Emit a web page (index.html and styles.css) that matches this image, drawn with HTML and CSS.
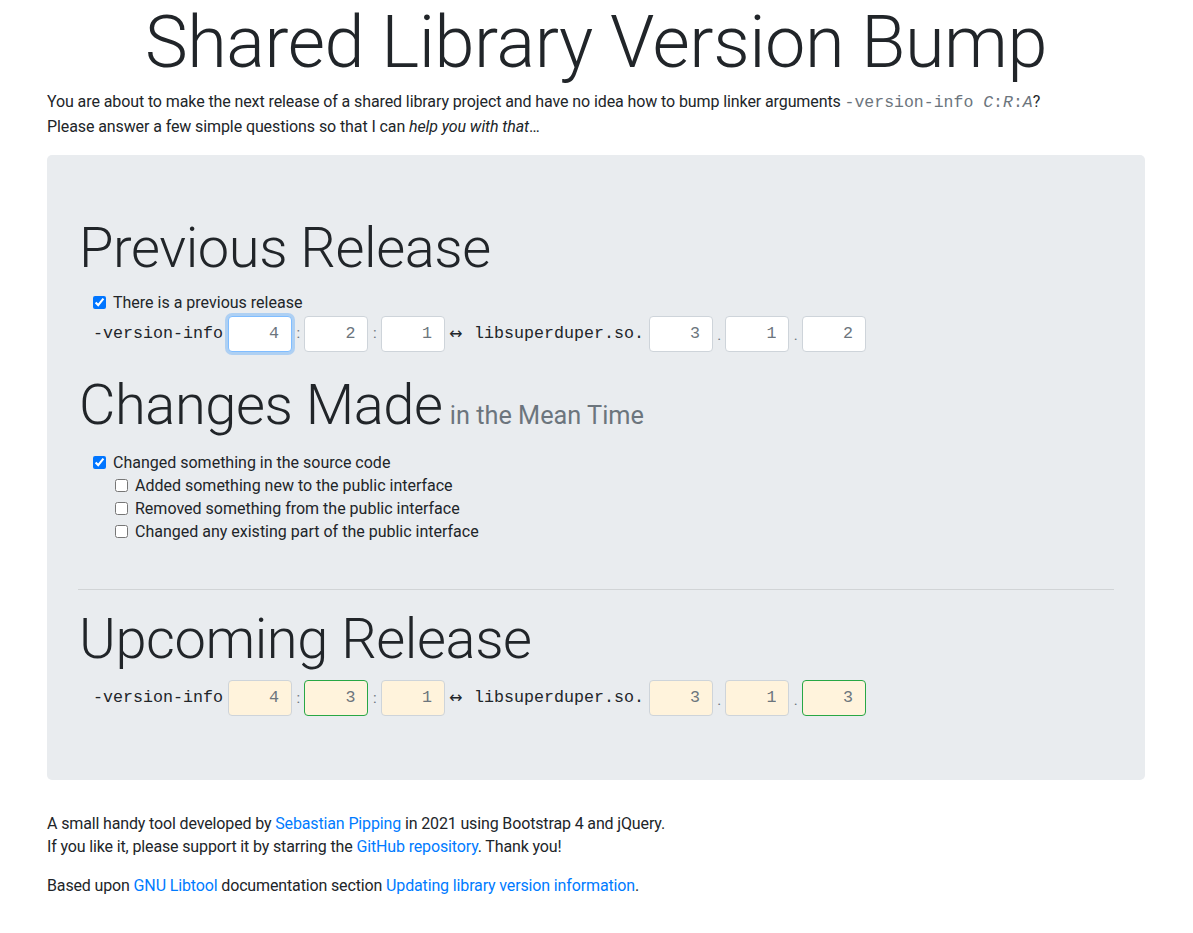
FILE: index.html
```html
<!DOCTYPE html>
<html lang="en">
<head>
<meta charset="utf-8">
<title>Shared Library Version Bump</title>
<link rel="stylesheet" href="styles.css">
</head>
<body>
<div class="page">
  <h1 class="title">Shared Library Version Bump</h1>
  <p class="intro">You are about to make the next release of a shared library project and have no idea how to bump linker arguments <code class="mono muted intro-code">-version-info <var>C</var>:<var>R</var>:<var>A</var></code>?<br>Please answer a few simple questions so that I can <em>help you with that</em>…</p>

  <section class="jumbo">
    <h1 class="sec">Previous Release</h1>
    <div class="block">
      <label class="check"><input type="checkbox" checked><span>There is a previous release</span></label>
      <div class="vrow">
        <span class="mono label">-version-info</span>
        <input class="num focus" type="text" value="4">
        <span class="sep">:</span>
        <input class="num" type="text" value="2">
        <span class="sep">:</span>
        <input class="num" type="text" value="1">
        <span class="arrow">↔</span>
        <span class="mono label">libsuperduper.so.</span>
        <input class="num" type="text" value="3">
        <span class="sep dot">.</span>
        <input class="num" type="text" value="1">
        <span class="sep dot">.</span>
        <input class="num" type="text" value="2">
      </div>
    </div>

    <h1 class="sec changes">Changes Made<small class="sub"> in the Mean Time</small></h1>
    <div class="block changes-block">
      <label class="check"><input type="checkbox" checked><span>Changed something in the source code</span></label>
      <div class="nested">
        <label class="check"><input type="checkbox"><span>Added something new to the public interface</span></label>
        <label class="check"><input type="checkbox"><span>Removed something from the public interface</span></label>
        <label class="check"><input type="checkbox"><span>Changed any existing part of the public interface</span></label>
      </div>
    </div>

    <hr class="rule">

    <h1 class="sec upcoming">Upcoming Release</h1>
    <div class="block">
      <div class="vrow">
        <span class="mono label">-version-info</span>
        <input class="num out" type="text" value="4" readonly>
        <span class="sep">:</span>
        <input class="num out changed" type="text" value="3" readonly>
        <span class="sep">:</span>
        <input class="num out" type="text" value="1" readonly>
        <span class="arrow">↔</span>
        <span class="mono label">libsuperduper.so.</span>
        <input class="num out" type="text" value="3" readonly>
        <span class="sep dot">.</span>
        <input class="num out" type="text" value="1" readonly>
        <span class="sep dot">.</span>
        <input class="num out changed" type="text" value="3" readonly>
      </div>
    </div>
  </section>

  <footer class="foot">
    <p>A small handy tool developed by <a href="#">Sebastian Pipping</a> in 2021 using Bootstrap 4 and jQuery.<br>If you like it, please support it by starring the <a href="#">GitHub repository</a>. Thank you!</p>
    <p>Based upon <a href="#">GNU Libtool</a> documentation section <a href="#">Updating library version information</a>.</p>
  </footer>
</div>
</body>
</html>
```

FILE: styles.css
```css
* { box-sizing: border-box; }
html, body { margin: 0; padding: 0; }
body {
  font-family: Roboto, "Noto Sans", "Liberation Sans", sans-serif;
  font-size: 16px;
  line-height: 1.5;
  color: #212529;
  background: #fff;
}
.page { padding: 0 48px 0 47px; }

.title {
  font-size: 72px;
  font-weight: 300;
  line-height: 1.2;
  text-align: center;
  letter-spacing: -0.42px;
  margin: 0 0 4px;
}
.intro { margin: 0 0 16px; line-height: 24px; letter-spacing: -0.1px; }
.mono {
  font-family: "Liberation Mono", "Courier New", monospace;
  font-size: 16.67px;
  letter-spacing: 0;
}
.intro-code { font-size: 16.5px; }
.muted { color: #6c757d; }
.mono var { font-style: italic; }

.jumbo {
  background: #e9ecef;
  border-radius: 5px;
  padding: 60px 32px 64px;
  margin-bottom: 32px;
}
.sec {
  font-size: 56px;
  font-weight: 300;
  line-height: 1.2;
  letter-spacing: -0.42px;
  margin: 0 0 8px;
}
.sec.changes { margin-top: 20px; }
.sec.upcoming { margin-bottom: 7px; }
.sub {
  font-size: 25.3px;
  font-weight: 400;
  letter-spacing: 0;
  color: #6c757d;
  margin-left: 1px;
}
.block { padding-left: 14px; }
.changes-block { padding-top: 4px; }

.check {
  display: flex;
  align-items: center;
  line-height: 23px;
}
.check input {
  margin: 0 7px 0 0;
  width: 13px;
  height: 13px;
  flex: none;
}
.block > .check:first-child { line-height: 24px; }
.changes-block > .check:first-child { line-height: 23px; }
.nested { padding-left: 22px; }

.vrow {
  display: flex;
  align-items: center;
  height: 36px;
  margin-top: 1px;
}
.label { color: #212529; margin-right: 5px; white-space: pre; }
.num {
  width: 64px;
  height: 36px;
  border: 1px solid #ced4da;
  border-radius: 4px;
  padding: 0 12px;
  text-align: right;
  font-family: "Liberation Mono", "Courier New", monospace;
  font-size: 16.67px;
  color: #6c757d;
  background: #fff;
  outline: none;
  flex: none;
}
.num.focus {
  border-color: #80bdff;
  box-shadow: 0 0 0 3px rgba(0, 123, 255, 0.25);
}
.num.out { background: #fff3dc; }
.num.changed { border-color: #28a745; }
.sep {
  width: 12.5px;
  text-align: center;
  color: #6c757d;
  font-size: 15px;
  flex: none;
}
.sep.dot { padding-top: 4px; }
.arrow {
  width: 29px;
  padding-left: 4px;
  font-family: "DejaVu Sans", sans-serif;
  font-size: 16px;
  color: #212529;
  flex: none;
}

.rule {
  border: 0;
  border-top: 1px solid rgba(0, 0, 0, 0.1);
  margin: 46px -1px 16px;
}

.foot p { margin: 0 0 16px; line-height: 23px; letter-spacing: -0.14px; }
.foot a { color: #007bff; text-decoration: none; }
```
